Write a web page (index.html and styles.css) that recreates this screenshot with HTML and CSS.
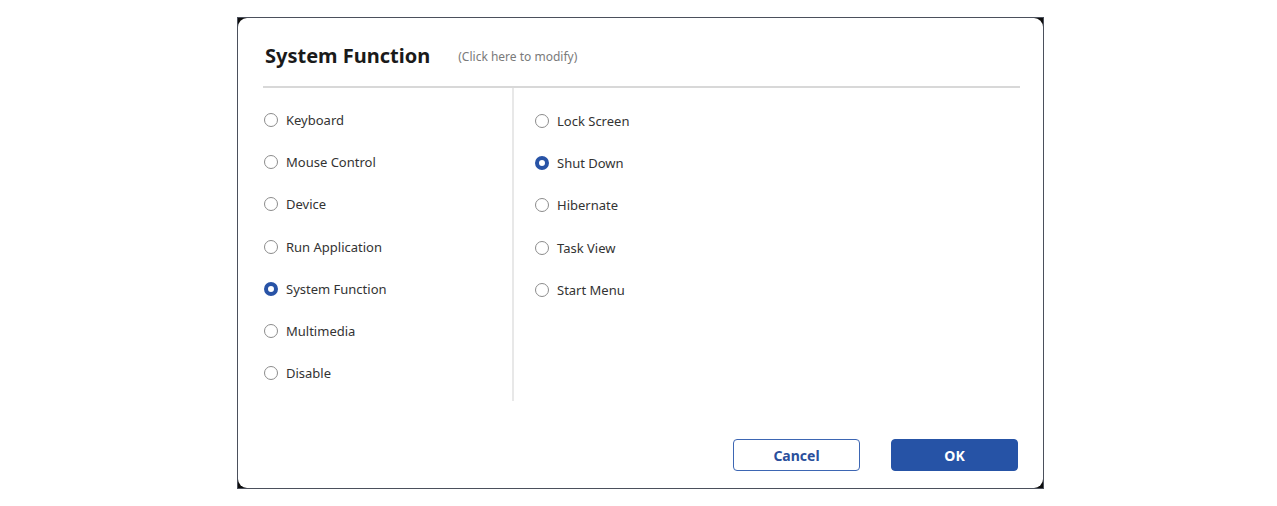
FILE: index.html
```html
<!DOCTYPE html>
<html lang="en">
<head>
<meta charset="utf-8">
<title>System Function</title>
<link rel="stylesheet" href="styles.css">
</head>
<body>
<div class="frame">
  <div class="dialog">
    <div class="header">
      <h1 class="title">System Function</h1>
      <span class="hint">(Click here to modify)</span>
    </div>
    <div class="body">
      <ul class="options options-main">
        <li class="option"><span class="radio"></span>Keyboard</li>
        <li class="option"><span class="radio"></span>Mouse Control</li>
        <li class="option"><span class="radio"></span>Device</li>
        <li class="option"><span class="radio"></span>Run Application</li>
        <li class="option"><span class="radio checked"></span>System Function</li>
        <li class="option"><span class="radio"></span>Multimedia</li>
        <li class="option"><span class="radio"></span>Disable</li>
      </ul>
      <ul class="options options-sub">
        <li class="option"><span class="radio"></span>Lock Screen</li>
        <li class="option"><span class="radio checked"></span>Shut Down</li>
        <li class="option"><span class="radio"></span>Hibernate</li>
        <li class="option"><span class="radio"></span>Task View</li>
        <li class="option"><span class="radio"></span>Start Menu</li>
      </ul>
    </div>
    <div class="footer">
      <button class="btn btn-cancel" type="button">Cancel</button>
      <button class="btn btn-ok" type="button">OK</button>
    </div>
  </div>
</div>
</body>
</html>
```

FILE: styles.css
```css
* {
  box-sizing: border-box;
}

html, body {
  margin: 0;
  padding: 0;
  background: #ffffff;
}

body {
  font-family: "Noto Sans", "Open Sans", sans-serif;
  color: #333333;
}

/* window frame: dark edge with the rounded white panel inside */
.frame {
  width: 807px;
  height: 472px;
  margin: 17px 0 0 237px;
  border: 1px solid #4b505c;
  background: #0d0d0d;
}

.dialog {
  height: 100%;
  background: #ffffff;
  border-radius: 9px;
  display: flex;
  flex-direction: column;
  padding: 0 23px 0 25px;
}

.header {
  height: 70px;
  display: flex;
  align-items: center;
  padding: 8px 0 0 2px;
  border-bottom: 2px solid #d8d8d8;
}

.title {
  margin: 0;
  font-size: 20px;
  line-height: 24px;
  font-weight: 700;
  color: #1a1a1a;
}

.hint {
  margin-left: 28px;
  font-size: 12px;
  color: #7a7a7a;
}

.body {
  display: flex;
  align-items: flex-start;
}

.options {
  list-style: none;
  margin: 0;
  padding: 0;
}

.options-main {
  width: 251px;
  padding: 11px 0 7px 1px;
  border-right: 2px solid #e8e8e8;
}

.options-sub {
  padding: 12px 0 0 21px;
}

.option {
  height: 42.2px;
  display: flex;
  align-items: center;
  font-size: 13px;
  color: #333333;
}

.radio {
  width: 14px;
  height: 14px;
  margin-right: 8px;
  border-radius: 50%;
  border: 1.5px solid #8c8c8c;
  background: #ffffff;
  flex: none;
}

.radio.checked {
  border: 4px solid #2853a6;
}

.footer {
  margin-top: auto;
  display: flex;
  justify-content: flex-end;
  gap: 31px;
  padding: 0 2px 17px 0;
}

.btn {
  width: 127px;
  height: 32px;
  border-radius: 4px;
  font-family: "Noto Sans", "Open Sans", sans-serif;
  font-size: 14px;
  font-weight: 700;
  cursor: pointer;
}

.btn-cancel {
  background: #ffffff;
  border: 1px solid #3d66b3;
  color: #2a4f9c;
}

.btn-ok {
  background: #2653a6;
  border: 1px solid #2653a6;
  color: #ffffff;
}
```
